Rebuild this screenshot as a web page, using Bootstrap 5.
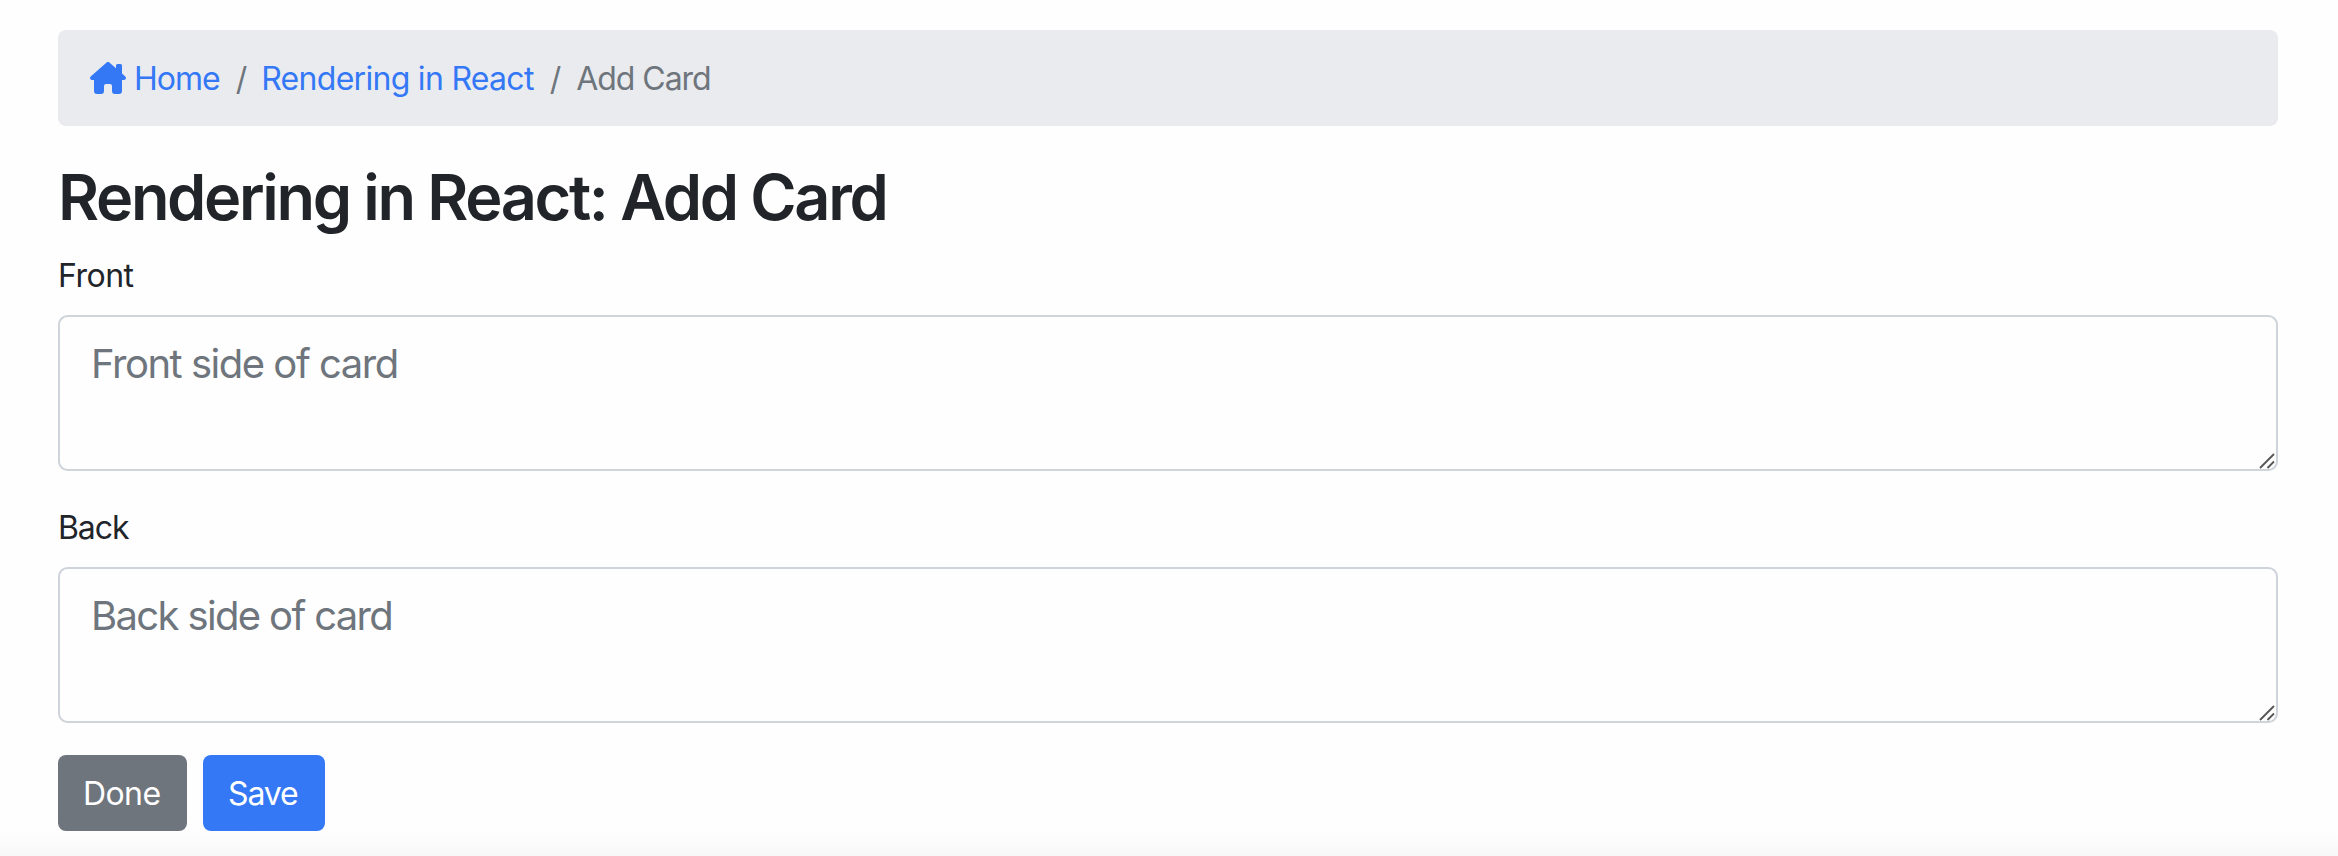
<!DOCTYPE html>
<html lang="en">
<head>
<meta charset="utf-8">
<meta name="viewport" content="width=device-width, initial-scale=1">
<title>Add Card</title>
<link href="https://cdn.jsdelivr.net/npm/bootstrap@5.3.0/dist/css/bootstrap.min.css" rel="stylesheet">
<style>
  html { font-size: 32px; }
  body {
    font-family: Inter, "Liberation Sans", sans-serif;
    color: #212529;
    background: linear-gradient(to top, #f8f8f8 0, #fefefe 26px, #fefefe 100%) no-repeat;
    height: 856px;
    overflow: hidden;
  }
  .page { padding: 30px 60px 0 58px; }
  .trail {
    --bs-breadcrumb-divider-color: #6e757c;
    --bs-breadcrumb-item-active-color: #6e757c;
    height: 96px;
    padding: 25px 32px 23px;
    margin-bottom: 32px;
    background: #eaebef;
    border-radius: 8px;
  }
  .trail .breadcrumb-item + .breadcrumb-item { padding-left: 16px; }
  .trail .breadcrumb-item + .breadcrumb-item::before { padding-right: 15px; letter-spacing: 0; }
  .trail .breadcrumb-item.deck::before { padding-right: 14px; }
  .trail a { color: #3478f6; }
  .home-link { letter-spacing: -1px; }
  .home-icon { margin: -2px 8px 0 0; }
  .deck { letter-spacing: -.71px; }
  .trail .active { letter-spacing: -1.03px; }
  .title { font-size: 63px; font-weight: 600; line-height: 76.8px; margin: 0 0 15px 0; padding-top: 1px; letter-spacing: -2.33px; }
  .form-label { display: block; line-height: 48px; padding-top: 1px; margin-bottom: 15px; }
  .tight-sm { letter-spacing: -.5px; }
  .tight { letter-spacing: -1.1px; }
  .field { height: 156px; margin-bottom: 32px; }
  .field textarea.form-control {
    height: 156px;
    min-height: 0;
    padding: 17px 31px 15px;
    border: 2px solid #ced4da;
    border-radius: 9.6px;
    font-size: 40px;
    line-height: 60px;
    resize: none;
    overflow: hidden;
    background: #fefefe;
    letter-spacing: -1.48px;
  }
  .field textarea.back-side { letter-spacing: -1.65px; }
  .field textarea::placeholder { color: #6e757c; opacity: 1; }
  .grip { position: absolute; right: 3px; bottom: 2px; }
  .actions { gap: 16px; }
  .action { height: 76px; padding: 1px 0 0 25px; border: 0; border-radius: 8px; font-size: 32px; line-height: 76px; text-align: left; color: #fff; }
  .action-done { width: 129px; background: #6e757c; letter-spacing: -.6px; }
  .action-save { width: 122px; background: #3478f6; letter-spacing: -1.15px; }
</style>
<script src="https://cdn.jsdelivr.net/npm/bootstrap@5.3.0/dist/js/bootstrap.bundle.min.js"></script>
</head>
<body>
<main class="page">
  <nav aria-label="breadcrumb">
    <ol class="breadcrumb trail">
      <li class="breadcrumb-item">
        <a class="d-flex align-items-center text-decoration-none home-link" href="#">
          <svg class="home-icon" width="36" height="32" viewBox="0 0 36 32" fill="#3478f6" aria-hidden="true"><path d="M16.6.5a2.1 2.1 0 0 1 2.800 0L26 6.300V3.500A1.500 1.500 0 0 1 27.500 2h3A1.500 1.500 0 0 1 32 3.500v8.100l3.300 3C36.600 15.800 35.900 18 34 18h-2v11a3 3 0 0 1-3 3h-4a3 3 0 0 1-3-3v-5a2 2 0 0 0-2-2h-4a2 2 0 0 0-2 2v5a3 3 0 0 1-3 3H7a3 3 0 0 1-3-3V18H2C.1 18-.6 15.800.7 14.600z"/></svg>Home</a>
      </li>
      <li class="breadcrumb-item deck"><a class="text-decoration-none" href="#">Rendering in React</a></li>
      <li class="breadcrumb-item active" aria-current="page">Add Card</li>
    </ol>
  </nav>
  <h1 class="title">Rendering in React: Add Card</h1>
  <form>
    <label class="form-label tight-sm" for="front">Front</label>
    <div class="field position-relative">
      <textarea class="form-control" id="front" placeholder="Front side of card"></textarea>
      <svg class="grip" width="16" height="16" viewBox="0 0 16 16" stroke="#555" stroke-width="1.8" fill="none" aria-hidden="true"><path d="M1 15 15 1M8.500 15 15 8.500"/></svg>
    </div>
    <label class="form-label tight" for="back">Back</label>
    <div class="field position-relative">
      <textarea class="form-control back-side" id="back" placeholder="Back side of card"></textarea>
      <svg class="grip" width="16" height="16" viewBox="0 0 16 16" stroke="#555" stroke-width="1.8" fill="none" aria-hidden="true"><path d="M1 15 15 1M8.500 15 15 8.500"/></svg>
    </div>
    <div class="d-flex actions">
      <button type="button" class="btn action action-done">Done</button>
      <button type="button" class="btn action action-save">Save</button>
    </div>
  </form>
</main>
</body>
</html>
